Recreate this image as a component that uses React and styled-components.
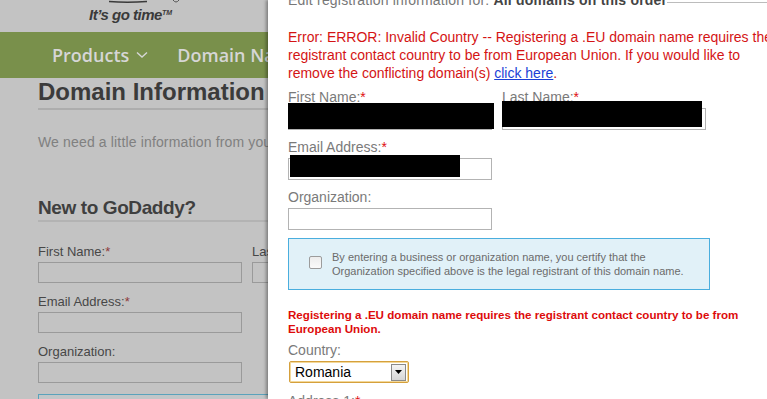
import React from 'react';
import styled, { createGlobalStyle } from 'styled-components';

const Global = createGlobalStyle`
    html, body {
        margin: 0;
        padding: 0;
        overflow: hidden;
    }
    body {
        font-family: 'Liberation Sans', Arial, sans-serif;
    }
`

const Screen = styled.div`
    position: relative;
    width: 767px;
    height: 399px;
    overflow: hidden;
    background-color: #c3c3c3;
`

/* ---------- dimmed page behind the dialog ---------- */

const LogoBar = styled.div`
    height: 32px;
    padding-left: 89px;
    box-sizing: border-box;
`
const Tagline = styled.div`
    font-size: 15px;
    font-weight: bold;
    font-style: italic;
    letter-spacing: -0.5px;
    color: #3a3a3a;
    line-height: 14px;
    margin-top: 1px;
    sup {
        font-size: 7px;
        letter-spacing: 0;
        vertical-align: 5px;
    }
`
const Nav = styled.nav`
    height: 46px;
    background-color: #79904b;
    display: flex;
    align-items: center;
    gap: 29px;
    padding-left: 52px;
    font-family: 'Open Sans', sans-serif;
    font-weight: 600;
    font-size: 18px;
    color: #d6d6d6;
    white-space: nowrap;
`
const NavItem = styled.span`
    display: flex;
    align-items: center;
    gap: 7px;
`
const BgContent = styled.div`
    padding-left: 38px;
    width: 400px;
`
const BgTitle = styled.h1`
    margin: 0;
    font-size: 24px;
    line-height: 28px;
    font-weight: bold;
    color: #3b3b3b;
    white-space: nowrap;
    padding-bottom: 2px;
    border-bottom: 2px solid #adadad;
`
const BgIntro = styled.p`
    margin: 23px 0 0;
    font-size: 14px;
    letter-spacing: 0.15px;
    line-height: 18px;
    color: #808080;
    white-space: nowrap;
`
const BgSubTitle = styled.h2`
    margin: 45px 0 0;
    font-size: 19px;
    letter-spacing: -0.4px;
    line-height: 24px;
    font-weight: bold;
    color: #3f3f3f;
    border-bottom: 2px solid #b3b3b3;
`
const BgRow = styled.div`
    display: flex;
    gap: 10px;
    margin-top: ${p => p.$first ? '22px' : '11px'};
`
const BgField = styled.div`
    width: 204px;
    flex-shrink: 0;
`
const BgLabel = styled.div`
    font-size: 13px;
    line-height: 16px;
    color: #474747;
    margin-bottom: 2px;
    white-space: nowrap;
    b {
        font-weight: normal;
        color: #8e3a3a;
    }
`
const BgInput = styled.div`
    height: 21px;
    box-sizing: border-box;
    border: 1px solid #9a9a9a;
`
const BgNotice = styled.div`
    margin-top: 11px;
    height: 60px;
    width: 420px;
    border: 1px solid #5aa2bb;
    background-color: #c1c6c8;
`

/* ---------- the dialog ---------- */

const Modal = styled.div`
    position: absolute;
    top: 0;
    bottom: 0;
    left: 268px;
    width: 520px;
    background-color: #ffffff;
    box-shadow: -2px 0 3px rgba(0, 0, 0, 0.35);
    padding-left: 20px;
    box-sizing: border-box;
`
const Inner = styled.div`
    width: 496px;
`
const EditHeader = styled.div`
    display: flex;
    margin-top: -9px;
    font-size: 14px;
    line-height: 18px;
    color: #777;
    white-space: nowrap;
    letter-spacing: 0.2px;
    b {
        color: #444;
    }
`
const Rule = styled.div`
    flex: 1;
    height: 1px;
    margin: 11px -40px 0 0;
    background-color: #bcbcbc;
`
const ErrorText = styled.p`
    margin: 19px 0 0;
    font-size: 14px;
    line-height: 18px;
    color: #d41414;
    a {
        color: #1a3fd6;
        text-decoration: underline;
    }
`
const Row = styled.div`
    display: flex;
    gap: 10px;
    margin-top: ${p => p.$gap || 9}px;
`
const Field = styled.div`
    position: relative;
    width: ${p => p.$width || 204}px;
`
const Label = styled.div`
    font-size: 14px;
    line-height: 17px;
    color: #7a7a7a;
    margin-bottom: 2px;
    white-space: nowrap;
    b {
        font-weight: normal;
        color: #e01010;
    }
`
const Input = styled.div`
    height: 22px;
    box-sizing: border-box;
    border: 1px solid #b3b3b3;
    background-color: #fff;
`
const Redacted = styled.div`
    position: absolute;
    top: ${p => p.$top}px;
    left: ${p => p.$left}px;
    width: ${p => p.$w}px;
    height: ${p => p.$h}px;
    background-color: #000;
`
const Notice = styled.div`
    margin-top: 8px;
    width: 422px;
    box-sizing: border-box;
    border: 1px solid #4aaede;
    background-color: #e1f1f8;
    padding: 11px 20px;
    display: flex;
    align-items: flex-start;
    gap: 10px;
`
const CheckBox = styled.span`
    width: 13px;
    height: 13px;
    box-sizing: border-box;
    margin-top: 6px;
    flex-shrink: 0;
    border: 1px solid #9c9c9c;
    border-radius: 2px;
    background: linear-gradient(#ededed, #fafafa);
`
const NoticeText = styled.p`
    margin: 0;
    max-width: 360px;
    font-size: 11px;
    line-height: 14px;
    color: #6b6b6b;
`
const Warning = styled.p`
    margin: 18px 0 0;
    font-size: 11.6px;
    line-height: 14px;
    font-weight: bold;
    color: #dd0b0b;
`
const Select = styled.div`
    margin-left: 1px;
    width: 120px;
    height: 22px;
    box-sizing: border-box;
    border: 1px solid #d5a03c;
    box-shadow: inset 0 0 0 1px #f3d89a;
    border-radius: 2px;
    display: flex;
    align-items: center;
    padding: 0 2px 0 5px;
    font-size: 14px;
    color: #000;
    justify-content: space-between;
`
const SelectButton = styled.span`
    width: 15px;
    height: 17px;
    box-sizing: border-box;
    border: 1px solid #8a8a8a;
    background: linear-gradient(#f4f4f4, #d6d6d6);
    display: flex;
    align-items: center;
    justify-content: center;
`

const Chevron = () => (
    <svg width="12" height="8" viewBox="0 0 12 8">
        <path d="M1 1.5 L6 6 L11 1.5" fill="none" stroke="#d6d6d6" strokeWidth="1.4" />
    </svg>
)

const App = () => {
    return (
        <>
            <Global />
            <Screen>
                <LogoBar>
                    <svg width="100" height="5" viewBox="0 0 100 5" style={{ display: 'block' }}>
                        <path d="M20 1.5 Q38 3 58 1.5" fill="none" stroke="#3a3a3a" strokeWidth="1.3" />
                        <path d="M84 0 Q87 4 90 0" fill="none" stroke="#555" strokeWidth="1" />
                    </svg>
                    <Tagline>It’s go time<sup>TM</sup></Tagline>
                </LogoBar>

                <Nav>
                    <NavItem>Products <Chevron /></NavItem>
                    <NavItem>Domain Names</NavItem>
                </Nav>

                <BgContent>
                    <BgTitle>Domain Information</BgTitle>
                    <BgIntro>We need a little information from you before we register your domain.</BgIntro>
                    <BgSubTitle>New to GoDaddy?</BgSubTitle>

                    <BgRow $first>
                        <BgField>
                            <BgLabel>First Name:<b>*</b></BgLabel>
                            <BgInput />
                        </BgField>
                        <BgField>
                            <BgLabel>Last Name:<b>*</b></BgLabel>
                            <BgInput />
                        </BgField>
                    </BgRow>
                    <BgRow>
                        <BgField>
                            <BgLabel>Email Address:<b>*</b></BgLabel>
                            <BgInput />
                        </BgField>
                    </BgRow>
                    <BgRow>
                        <BgField>
                            <BgLabel>Organization:</BgLabel>
                            <BgInput />
                        </BgField>
                    </BgRow>
                    <BgNotice />
                </BgContent>

                <Modal>
                    <Inner>
                        <EditHeader>
                            <span>Edit registration information for: <b>All domains on this order</b></span>
                            <Rule />
                        </EditHeader>

                        <ErrorText>
                            Error: ERROR: Invalid Country -- Registering a .EU domain name requires the
                            registrant contact country to be from European Union. If you would like to
                            remove the conflicting domain(s) <a href="#">click here</a>.
                        </ErrorText>

                        <Row $gap={7}>
                            <Field>
                                <Label>First Name:<b>*</b></Label>
                                <Input />
                                <Redacted $top={14} $left={0} $w={206} $h={26} />
                            </Field>
                            <Field>
                                <Label>Last Name:<b>*</b></Label>
                                <Input />
                                <Redacted $top={12} $left={0} $w={200} $h={26} />
                            </Field>
                        </Row>

                        <Row>
                            <Field>
                                <Label>Email Address:<b>*</b></Label>
                                <Input />
                                <Redacted $top={16} $left={2} $w={170} $h={22} />
                            </Field>
                        </Row>

                        <Row>
                            <Field>
                                <Label>Organization:</Label>
                                <Input />
                            </Field>
                        </Row>

                        <Notice>
                            <CheckBox />
                            <NoticeText>
                                By entering a business or organization name, you certify that the
                                Organization specified above is the legal registrant of this domain name.
                            </NoticeText>
                        </Notice>

                        <Warning>
                            Registering a .EU domain name requires the registrant contact country to be from
                            European Union.
                        </Warning>

                        <Row $gap={6}>
                            <Field $width={140}>
                                <Label>Country:</Label>
                                <Select>
                                    Romania
                                    <SelectButton>
                                        <svg width="7" height="4" viewBox="0 0 7 4">
                                            <path d="M0 0 H7 L3.5 4 Z" fill="#000" />
                                        </svg>
                                    </SelectButton>
                                </Select>
                            </Field>
                        </Row>

                        <Row $gap={10}>
                            <Field>
                                <Label>Address 1:<b>*</b></Label>
                                <Input />
                            </Field>
                        </Row>
                    </Inner>
                </Modal>
            </Screen>
        </>
    );
}

export default App;
